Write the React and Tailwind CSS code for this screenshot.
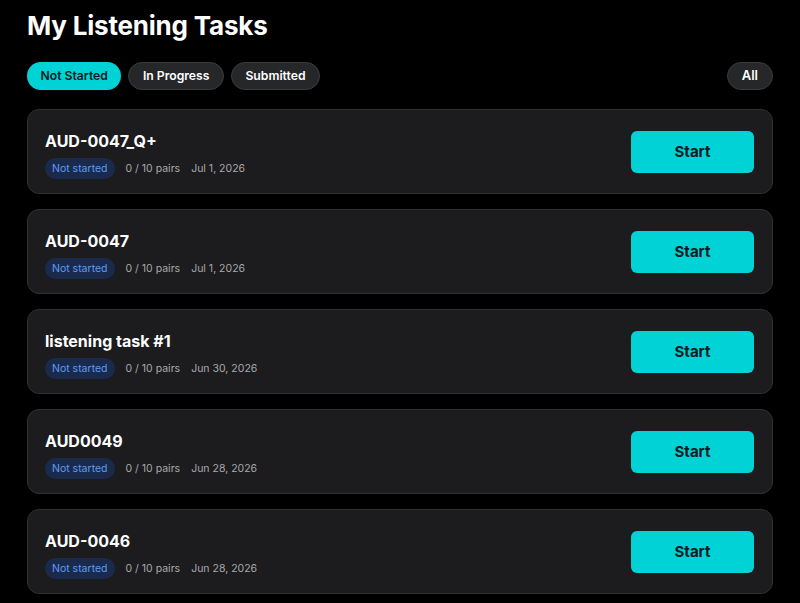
import React, { useState } from "react";

const tasks = [
  { name: "AUD-0047_Q+", pairs: "0 / 10 pairs", date: "Jul 1, 2026" },
  { name: "AUD-0047", pairs: "0 / 10 pairs", date: "Jul 1, 2026" },
  { name: "listening task #1", pairs: "0 / 10 pairs", date: "Jun 30, 2026" },
  { name: "AUD0049", pairs: "0 / 10 pairs", date: "Jun 28, 2026" },
  { name: "AUD-0046", pairs: "0 / 10 pairs", date: "Jun 28, 2026" },
];

const tabs = ["Not Started", "In Progress", "Submitted"];

export default function App() {
  const [active, setActive] = useState("Not Started");

  return (
    <div className="min-h-[603px] bg-black px-[27px] pt-[8px] text-white" style={{ fontFamily: "Inter, 'Liberation Sans', sans-serif" }}>
      <h1 className="text-[26px] font-bold leading-[36px] tracking-[-0.2px]">My Listening Tasks</h1>

      {/* Filters */}
      <div className="mt-[18px] flex items-center">
        <div className="flex gap-[7px]">
          {tabs.map(t => (
            <button key={t} onClick={() => setActive(t)}
              className={`h-[28px] rounded-full px-[13.5px] text-[12.2px] font-semibold ${active === t ? "bg-[#00d2d6] text-[#0b1a1c]" : "border border-[#3a3b3e] bg-[#262729] text-white"}`}>
              {t}
            </button>
          ))}
        </div>
        <button className="ml-auto h-[28px] rounded-full border border-[#3a3b3e] bg-[#262729] px-[14px] text-[13px] font-semibold">All</button>
      </div>

      {/* Task list */}
      <div className="mt-[19px] flex flex-col gap-[15px]">
        {tasks.map(t => (
          <div key={t.name} className="flex h-[85px] items-center justify-between rounded-[12px] border border-[#313134] bg-[#1c1c1e] pl-[17px] pr-[18px]">
            <div className="mt-[6px]">
              <div className="text-[16px] font-bold leading-[22px]">{t.name}</div>
              <div className="mt-[6px] flex items-center gap-[11px] text-[10.5px] text-[#a8a8ab]">
                <span className="rounded-full bg-[#1a2a4d] px-[7px] py-[2.5px] text-[#5c9cf2]">Not started</span>
                <span>{t.pairs}</span>
                <span>{t.date}</span>
              </div>
            </div>
            <button className="h-[42px] w-[123px] rounded-[6px] bg-[#00d2d6] pt-[2px] text-[15px] font-bold text-[#0b1a1c]">Start</button>
          </div>
        ))}
      </div>
    </div>
  );
}
